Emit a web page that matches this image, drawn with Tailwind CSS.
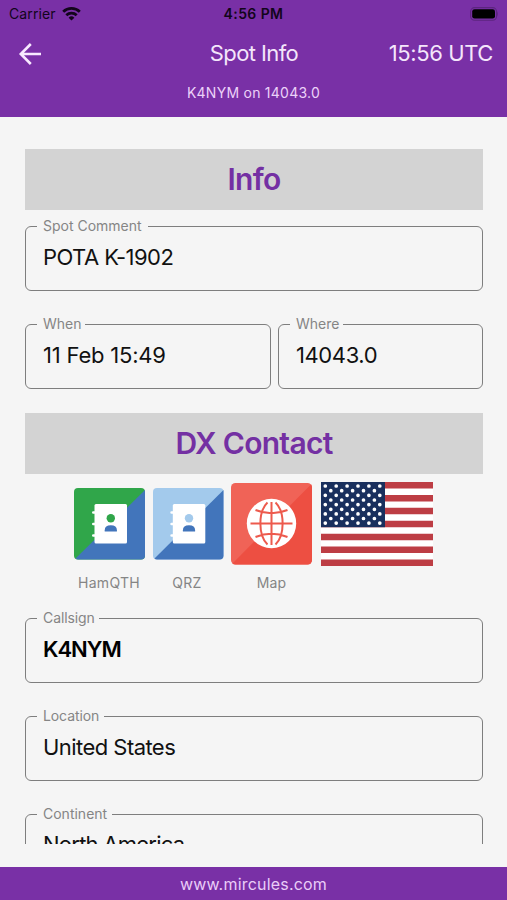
<!DOCTYPE html>
<html lang="en">
<head>
<meta charset="utf-8">
<title>Spot Info</title>
<script src="https://cdn.jsdelivr.net/npm/@tailwindcss/browser@4"></script>
</head>
<body class="w-[507px] h-[900px] overflow-hidden bg-[#f5f5f5] font-['Inter',sans-serif] flex flex-col">
<header class="h-[117px] shrink-0 bg-[#7930a6] flex flex-col">
  <div class="h-7 grid grid-cols-3 items-center px-[9px] text-[#12051b]">
    <div class="flex items-center gap-[6px]">
      <span class="text-[14px] leading-7 tracking-[0.1px]">Carrier</span>
      <svg width="19" height="14" viewBox="0 0 19 14" fill="none" stroke="#12051b" stroke-width="2.8"><path d="M1.200 4.800a12 12 0 0 1 16.600 0M4.300 8.200a7.600 7.600 0 0 1 10.400 0"/><path d="M9.500 13.500 6.600 10.700a4.200 4.200 0 0 1 5.800 0z" fill="#12051b" stroke="none"/></svg>
    </div>
    <span class="-mt-px text-center text-[14px] font-semibold tracking-[0.4px]">4:56 PM</span>
    <svg class="justify-self-end -mt-px" width="30" height="14" viewBox="0 0 30 14"><rect x="2.600" y=".6" width="26" height="12.600" rx="4" fill="none" stroke="#5c257f" stroke-width="1.100"/><rect x="4.200" y="2.200" width="22.800" height="9.400" rx="2.400" fill="#000"/><path d="M29.200 4.600q1.500 2.300 0 4.600z" fill="#5c257f"/></svg>
  </div>
  <div class="h-[51px] grid grid-cols-3 items-center pl-[18px] pr-[14px] text-[#f4e6fb]">
    <svg width="24" height="24" viewBox="0 0 24 24" fill="none" stroke="#f8e9ff" stroke-width="2.600"><path d="M23 12H3M12.800 2 2.800 12l10 10"/></svg>
    <span class="-ml-[3px] text-center text-[22px] tracking-[-0.6px]">Spot Info</span>
    <span class="text-right text-[22px] tracking-[-0.4px] whitespace-nowrap">15:56 UTC</span>
  </div>
  <div class="h-[29px] text-center text-[14px] leading-[28px] tracking-[0.25px] text-[#ecd2f9]">K4NYM on 14043.0</div>
</header>
<main class="h-[727px] shrink-0 overflow-hidden px-[25px] pt-8 flex flex-col">
  <h1 class="w-[458px] h-[61px] shrink-0 bg-[#d3d3d3] text-[#7430a3] text-center text-[30px] leading-[61px] font-semibold tracking-[-0.7px]">Info</h1>
  <fieldset class="w-[458px] h-[73px] shrink-0 mt-2 border border-[#7e7e7e] rounded-[6px] pl-[17px]">
    <legend class="-ml-[6px] w-[111px] h-4 pl-[6px] text-[14px] leading-4 text-[#858585] whitespace-nowrap">Spot Comment</legend>
    <p class="mt-2 text-[22px] leading-[30px] text-[#111] tracking-[-0.55px]">POTA K-1902</p>
  </fieldset>
  <div class="mt-[25px] flex gap-[7px]">
    <fieldset class="w-[246px] h-[73px] shrink-0 border border-[#7e7e7e] rounded-[6px] pl-[17px]">
      <legend class="-ml-[6px] w-[48px] h-4 pl-[6px] text-[14px] leading-4 text-[#858585] whitespace-nowrap">When</legend>
      <p class="mt-2 text-[22px] leading-[30px] text-[#111] tracking-[-0.2px]">11 Feb 15:49</p>
    </fieldset>
    <fieldset class="w-[205px] h-[73px] shrink-0 border border-[#7e7e7e] rounded-[6px] pl-[17px]">
      <legend class="-ml-[6px] w-[53px] h-4 pl-[6px] text-[14px] leading-4 text-[#858585] whitespace-nowrap">Where</legend>
      <p class="mt-2 text-[22px] leading-[30px] text-[#111] tracking-[-0.4px]">14043.0</p>
    </fieldset>
  </div>
  <h2 class="mt-[24px] w-[458px] h-[61px] shrink-0 bg-[#d3d3d3] text-[#7430a3] text-center text-[30px] leading-[61px] font-semibold tracking-[-0.7px]">DX Contact</h2>
  <section class="h-[136px] shrink-0 pl-[49px] flex items-start text-center text-[14px] text-[#858585]">
    <div class="w-[71px] mt-[14px]">
      <svg class="block" width="71" height="72" viewBox="0 0 71 72"><rect width="71" height="71.5" rx="4" fill="#30a64a"/><path d="M71 2v65.500a4 4 0 0 1-4 4H4a4 4 0 0 1-2.500-1z" fill="#4275bb"/><rect x="20.500" y="16" width="32.500" height="39.500" rx="1.500" fill="#fff"/><path d="M19.300 24.500h4M19.300 36h4M19.300 47.500h4" stroke="#fff" stroke-width="2.600" stroke-linecap="round"/><circle cx="36.800" cy="30.300" r="4.200" fill="#30a64a"/><path d="M30.700 43.500v-1.300q0-5 6.100-5t6.100 5v1.300z" fill="#4275bb"/></svg>
      <p class="mt-[15px] -ml-[1px] leading-4 tracking-[0.3px]">HamQTH</p>
    </div>
    <div class="w-[71px] ml-[8px] mt-[14px]">
      <svg class="block" width="71" height="72" viewBox="0 0 71 72"><rect width="70.500" height="71.5" rx="4" fill="#a3caec"/><path d="M70.500 2v65.500a4 4 0 0 1-4 4H4a4 4 0 0 1-2.500-1z" fill="#4275bb"/><rect x="19.800" y="16" width="32.500" height="39.500" rx="1.500" fill="#fff"/><path d="M18.600 24.500h4M18.600 36h4M18.600 47.500h4" stroke="#fff" stroke-width="2.600" stroke-linecap="round"/><circle cx="36" cy="30.300" r="4.200" fill="#a3caec"/><path d="M29.900 43.500v-1.300q0-5 6.100-5t6.100 5v1.300z" fill="#4275bb"/></svg>
      <p class="mt-[15px] -ml-[3px] leading-4 tracking-[0.3px]">QRZ</p>
    </div>
    <div class="w-[81px] ml-[7px] mt-[9px]">
      <svg class="block" width="81" height="82" viewBox="0 0 81 82"><rect width="81" height="81.500" rx="4.500" fill="#f06357"/><path d="M80 1.500q1 1 1 3V77a4.500 4.500 0 0 1-4.500 4.500h-72q-2 0-3-1z" fill="#ed4f42"/><circle cx="40.500" cy="40.500" r="24.700" fill="#fff"/><g fill="none" stroke="#ed5a4d" stroke-width="2"><path d="M40.500 19v43M19.500 40.500h42M36.500 19.500c-9.500 9-9.500 33 0 42M44.500 19.500c9.500 9 9.500 33 0 42M24.500 27q16 6.500 32 0M24.500 54q16-6.500 32 0"/></g></svg>
      <p class="mt-[10px] leading-4 tracking-[0.2px]">Map</p>
    </div>
    <svg class="ml-[9px] mt-[8px]" width="112" height="84" viewBox="0 0 112 84">
      <rect width="112" height="84" fill="#fff"/>
      <path d="M0 3.230h112M0 16.150h112M0 29.080h112M0 42h112M0 54.920h112M0 67.850h112M0 80.770h112" stroke="#bd3d44" stroke-width="6.460"/>
      <rect width="64" height="45.200" fill="#192f5d"/>
      <g stroke="#fff" stroke-width="3.700" stroke-linecap="round" fill="none">
        <path stroke-dasharray="0 10.900" d="M4.300 4h56M4.300 13.300h56M4.300 22.600h56M4.300 31.900h56M4.300 41.100h56"/>
        <path stroke-dasharray="0 10.900" d="M9.800 8.700h46M9.800 18h46M9.800 27.300h46M9.800 36.500h46"/>
      </g>
    </svg>
  </section>
  <fieldset class="w-[458px] h-[73px] shrink-0 border border-[#7e7e7e] rounded-[6px] pl-[17px]">
    <legend class="-ml-[6px] w-[62px] h-4 pl-[6px] text-[14px] leading-4 tracking-[-0.1px] text-[#858585] whitespace-nowrap">Callsign</legend>
    <p class="mt-2 text-[22px] leading-[30px] text-[#000] font-semibold tracking-[-1px]">K4NYM</p>
  </fieldset>
  <fieldset class="mt-[25px] w-[458px] h-[73px] shrink-0 border border-[#7e7e7e] rounded-[6px] pl-[17px]">
    <legend class="-ml-[6px] w-[67px] h-4 pl-[6px] text-[14px] leading-4 tracking-[-0.1px] text-[#858585] whitespace-nowrap">Location</legend>
    <p class="mt-2 text-[22px] leading-[30px] text-[#111] tracking-[-0.55px]">United States</p>
  </fieldset>
  <fieldset class="mt-[25px] w-[458px] h-[73px] shrink-0 border border-[#7e7e7e] rounded-[6px] pl-[17px]">
    <legend class="-ml-[6px] w-[75px] h-4 pl-[6px] text-[14px] leading-4 text-[#858585] whitespace-nowrap">Continent</legend>
    <p class="mt-[7px] text-[22px] leading-[30px] text-[#111] tracking-[-0.75px]">North America</p>
  </fieldset>
</main>
<footer class="mt-[23px] h-[33px] shrink-0 bg-[#7930a6] text-center text-[16px] leading-[34px] tracking-[0.2px] text-[#e9cdf8]">www.mircules.com</footer>
</body>
</html>
